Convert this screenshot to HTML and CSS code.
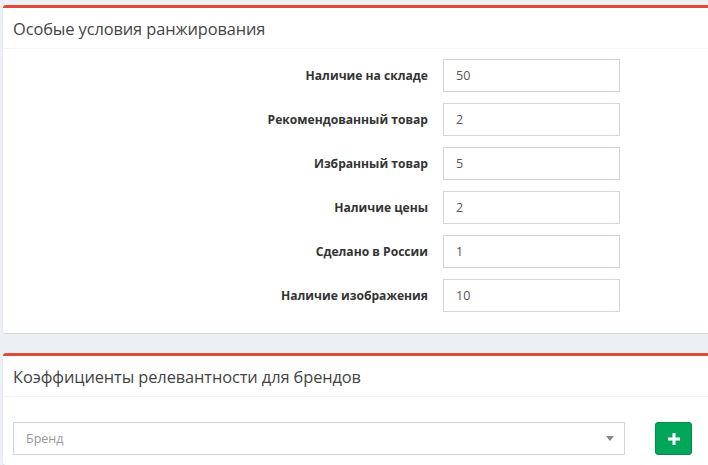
FILE: index.html
```html
<!DOCTYPE html>
<html lang="ru">
<head>
<meta charset="utf-8">
<title>Ранжирование</title>
<link rel="stylesheet" href="styles.css">
</head>
<body>
<div class="content">
  <section class="box">
    <header class="box-header">
      <h3 class="box-title">Особые условия ранжирования</h3>
    </header>
    <div class="box-body">
      <div class="form-row">
        <label class="form-label">Наличие на складе</label>
        <input class="form-input" type="text" value="50">
      </div>
      <div class="form-row">
        <label class="form-label">Рекомендованный товар</label>
        <input class="form-input" type="text" value="2">
      </div>
      <div class="form-row">
        <label class="form-label">Избранный товар</label>
        <input class="form-input" type="text" value="5">
      </div>
      <div class="form-row">
        <label class="form-label">Наличие цены</label>
        <input class="form-input" type="text" value="2">
      </div>
      <div class="form-row">
        <label class="form-label">Сделано в России</label>
        <input class="form-input" type="text" value="1">
      </div>
      <div class="form-row">
        <label class="form-label">Наличие изображения</label>
        <input class="form-input" type="text" value="10">
      </div>
    </div>
  </section>

  <section class="box">
    <header class="box-header">
      <h3 class="box-title">Коэффициенты релевантности для брендов</h3>
    </header>
    <div class="box-body brand-body">
      <div class="brand-row">
        <div class="select">
          <span class="select-placeholder">Бренд</span>
          <span class="select-arrow"></span>
        </div>
        <button class="btn-add" type="button" aria-label="Добавить">
          <svg width="12" height="12" viewBox="0 0 12 12"><path d="M4.5 0h3v4.5H12v3H7.5V12h-3V7.5H0v-3h4.5z" fill="#fff"/></svg>
        </button>
      </div>
    </div>
  </section>
</div>
</body>
</html>
```

FILE: styles.css
```css
html, body {
  margin: 0;
  padding: 0;
  background: #ecf0f5;
  overflow: hidden;
  font-family: "Open Sans", "Noto Sans", sans-serif;
}

.content {
  padding: 5px 0 0 3px;
  width: 730px;
}

.box {
  background: #fff;
  border-top: 3px solid #dd4b39;
  border-radius: 3px;
  box-shadow: 0 1px 1px rgba(0, 0, 0, 0.12);
  margin-bottom: 20px;
}

.box-header {
  height: 40px;
  padding: 0 10px;
  display: flex;
  align-items: center;
  border-bottom: 1px solid #f4f4f4;
}

.box-title {
  margin: 0;
  font-size: 16.4px;
  font-weight: 400;
  color: #444;
  letter-spacing: -0.1px;
}

.box-body {
  padding: 10px 10px 10px;
}

.form-row {
  display: grid;
  grid-template-columns: 430px 177px;
  align-items: center;
  margin-bottom: 11px;
}

.form-label {
  text-align: right;
  padding-right: 15px;
  font-size: 12.1px;
  font-weight: 700;
  color: #333;
}

.form-input {
  box-sizing: border-box;
  height: 33px;
  width: 177px;
  border: 1px solid #d2d6de;
  padding: 0 12px;
  font-family: inherit;
  font-size: 12.5px;
  color: #555;
  outline: none;
}

.brand-body {
  padding-top: 25px;
}

.brand-row {
  display: flex;
  align-items: center;
  gap: 30px;
}

.select {
  box-sizing: border-box;
  width: 612px;
  height: 33px;
  border: 1px solid #d2d6de;
  display: flex;
  align-items: center;
  justify-content: space-between;
  padding: 0 10px 0 12px;
}

.select-placeholder {
  font-size: 12.5px;
  color: #999;
}

.select-arrow {
  width: 0;
  height: 0;
  border-left: 4px solid transparent;
  border-right: 4px solid transparent;
  border-top: 5px solid #888;
}

.btn-add {
  box-sizing: border-box;
  width: 37px;
  height: 33px;
  background: #00a65a;
  border: 1px solid #008d4c;
  border-radius: 3px;
  display: flex;
  align-items: center;
  justify-content: center;
  padding: 0;
}
```
